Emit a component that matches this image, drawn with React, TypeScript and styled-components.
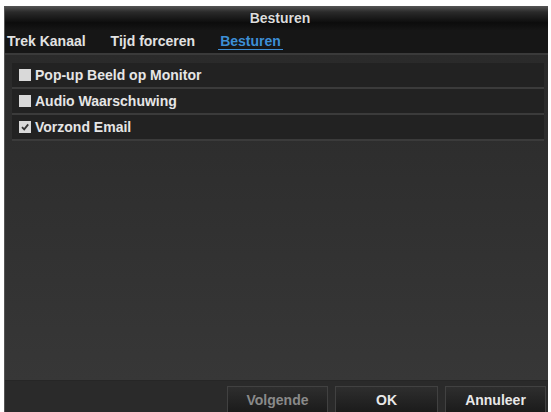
import styled, { createGlobalStyle } from "styled-components";

const GlobalStyle = createGlobalStyle`
  html, body {
    margin: 0;
    padding: 0;
    background: #ffffff;
  }
  body {
    font-family: "Liberation Sans", Arial, sans-serif;
  }
`;

const Page = styled.div`
  width: 551px;
  height: 412px;
  padding: 6px 3px 0 4px;
  box-sizing: border-box;
  display: flex;
`;

const Dialog = styled.div`
  flex: 1;
  display: flex;
  flex-direction: column;
  background: #2e2e2e;
  border-left: 1px solid #555;
  overflow: hidden;
`;

const TitleBar = styled.div`
  height: 24px;
  background: linear-gradient(#555 0%, #2a2a2a 25%, #0c0c0c 70%, #151515 100%);
  color: #dcdcdc;
  font-size: 14px;
  font-weight: bold;
  display: flex;
  align-items: center;
  justify-content: center;
  padding-left: 7px;
  text-shadow: 0 0 1px #000;
`;

const TabBar = styled.div`
  height: 23px;
  background: #161616;
  display: flex;
  align-items: center;
  gap: 21px;
  padding-left: 0;
  border-bottom: 2px solid #3a3a3a;
`;

const Tab = styled.span<{ $active?: boolean }>`
  font-size: 14px;
  font-weight: bold;
  color: ${(p) => (p.$active ? "#3d8fd6" : "#e2e2e2")};
  border-bottom: ${(p) => (p.$active ? "1px solid #3d8fd6" : "1px solid transparent")};
  padding: 0 2px;
  line-height: 16px;
`;

const Content = styled.div`
  flex: 1;
  background: linear-gradient(#2a2a2a, #373737);
  padding: 8px 4px 0 7px;
  display: flex;
  flex-direction: column;
`;

const List = styled.div`
  display: flex;
  flex-direction: column;
`;

const Row = styled.div`
  height: 24px;
  background: #222;
  border-bottom: 2px solid #3b3b3b;
  display: flex;
  align-items: center;
  gap: 4px;
  padding-left: 7px;
  font-size: 14px;
  font-weight: bold;
  color: #e6e6e6;
`;

const Box = styled.span`
  width: 12px;
  height: 12px;
  background: #d9d9d9;
  display: inline-flex;
  align-items: center;
  justify-content: center;
`;

const Footer = styled.div`
  height: 31px;
  background: #2a2a2a;
  border-top: 1px solid #262626;
  display: flex;
  justify-content: flex-end;
  align-items: flex-end;
  gap: 7px;
  padding-right: 2px;
`;

const Button = styled.div<{ $disabled?: boolean; $wide?: boolean }>`
  width: ${(p) => (p.$wide ? "103px" : "101px")};
  height: 26px;
  box-sizing: border-box;
  background: linear-gradient(#2e2e2e, #1b1b1b);
  border: 1px solid #414141;
  border-bottom: none;
  display: flex;
  align-items: center;
  justify-content: center;
  font-size: 14px;
  font-weight: bold;
  color: ${(p) => (p.$disabled ? "#8a8a8a" : "#e8e8e8")};
`;

const items = [
  { label: "Pop-up Beeld op Monitor", checked: false },
  { label: "Audio Waarschuwing", checked: false },
  { label: "Vorzond Email", checked: true },
];

function App() {
  return (
    <>
      <GlobalStyle />
      <Page>
        <Dialog>
          <TitleBar>Besturen</TitleBar>
          <TabBar>
            <Tab>Trek Kanaal</Tab>
            <Tab>Tijd forceren</Tab>
            <Tab $active>Besturen</Tab>
          </TabBar>
          <Content>
            <List>
              {items.map((item) => (
                <Row key={item.label}>
                  <Box>
                    {item.checked && (
                      <svg width="10" height="10" viewBox="0 0 10 10">
                        <path d="M2 5.2 L4.2 7.4 L8.2 2.4" stroke="#333" strokeWidth="1.8" fill="none" />
                      </svg>
                    )}
                  </Box>
                  {item.label}
                </Row>
              ))}
            </List>
          </Content>
          <Footer>
            <Button $disabled>Volgende</Button>
            <Button $wide>OK</Button>
            <Button>Annuleer</Button>
          </Footer>
        </Dialog>
      </Page>
    </>
  );
}

export default App;
